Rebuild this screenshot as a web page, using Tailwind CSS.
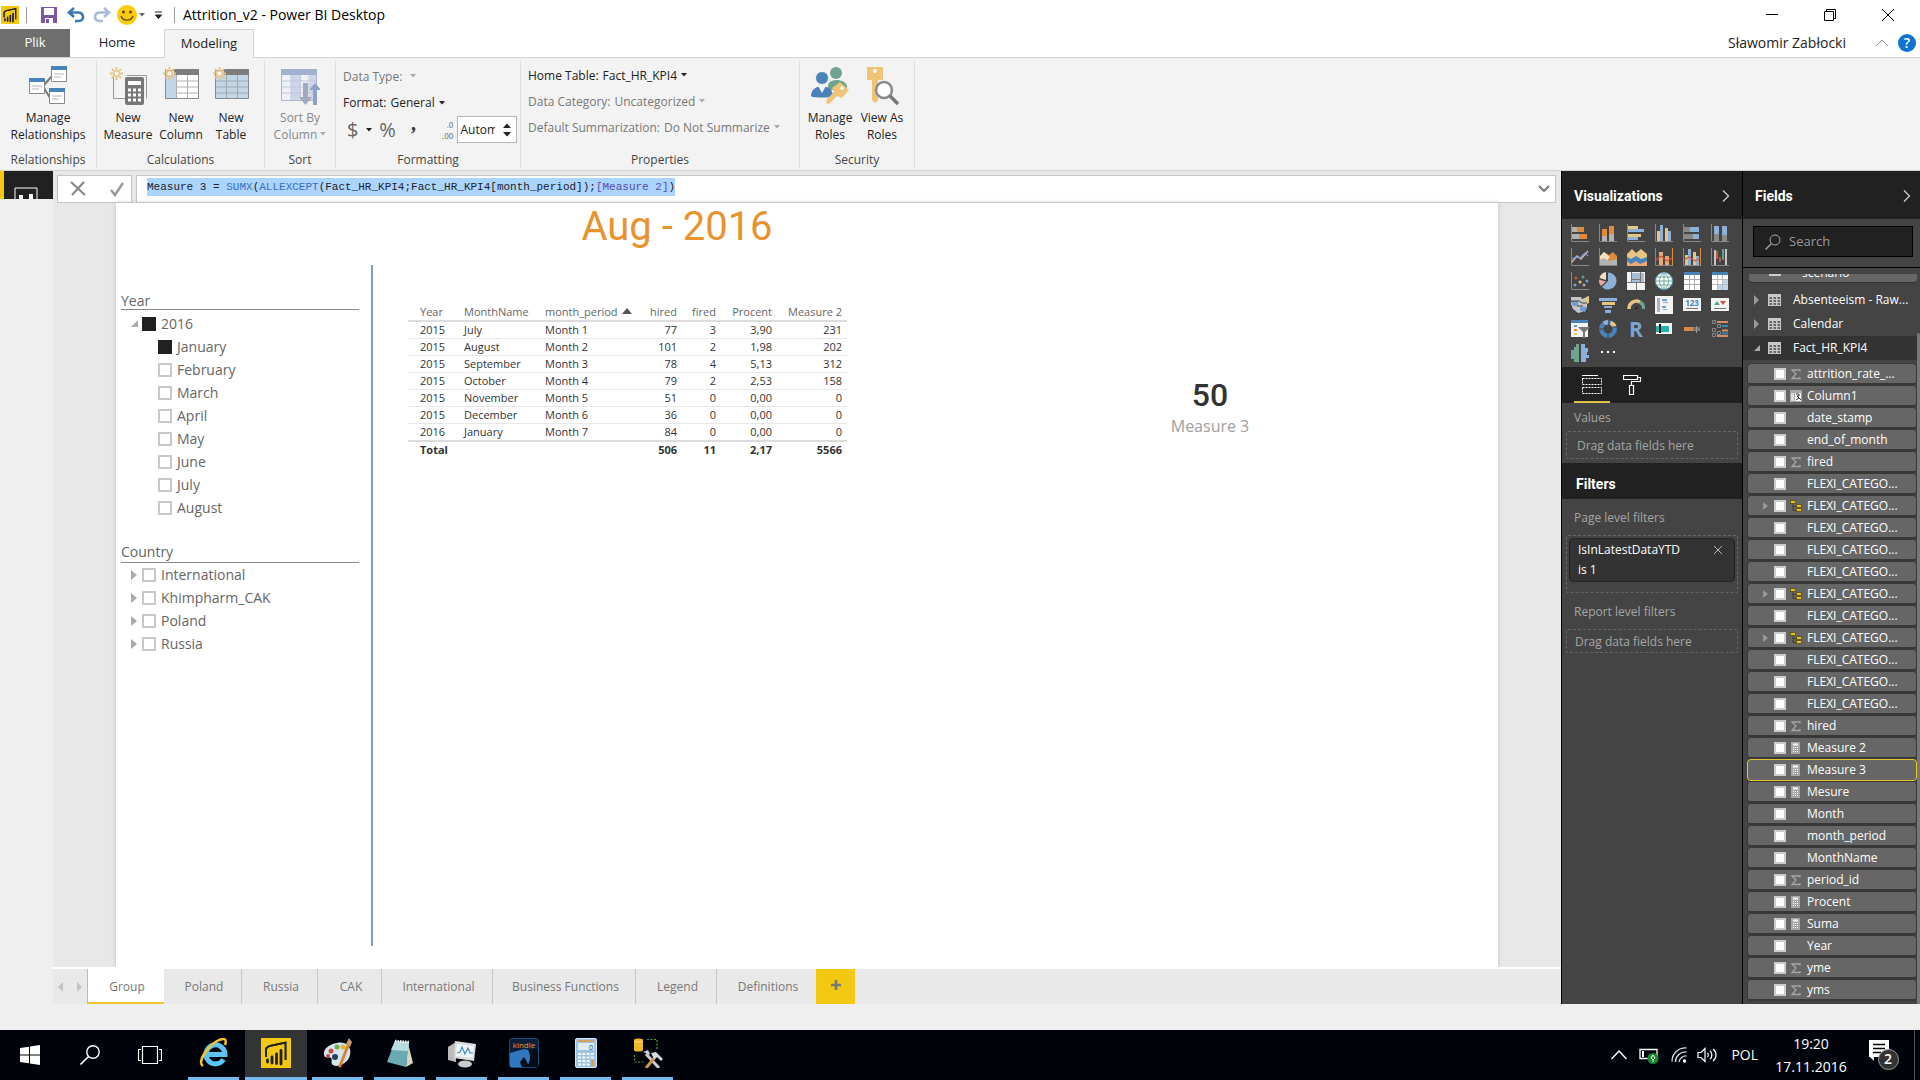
<!DOCTYPE html>
<html lang="en">
<head>
  <meta charset="UTF-8" />
  <meta name="viewport" content="width=device-width, initial-scale=1.0"/>
  <title>Attrition_v2 - Power BI Desktop</title>
  <script src="https://cdn.jsdelivr.net/npm/@tailwindcss/browser@4"></script>
</head>
<body class="flex flex-col min-h-screen bg-[#efefef] text-[#222] text-xs font-['Open_Sans','Noto_Sans',sans-serif]">

  <!-- shared symbols -->
  <svg class="hidden">
    <symbol id="pbi" viewBox="0 0 30 30">
      <rect width="30" height="30" fill="#f2c811"/>
      <path d="M5 19V10.500L8 8L24.500 4.500V22" fill="none" stroke="#222" stroke-width="1.800"/>
      <path d="M5 24V19M10 26V15M15.500 27V12M21 27V9" stroke="#f2c811" stroke-width="5"/>
      <path d="M5 19V10.500L8 8L24.500 4.500V22" fill="none" stroke="#222" stroke-width="1.800"/>
      <path d="M6.500 22v2M11 19v6M15.500 16v9.500M20 12.500v13.500" stroke="#222" stroke-width="2.800" stroke-linecap="round"/>
    </symbol>
    <symbol id="down" viewBox="0 0 6 4"><path d="M0 0h6L3 3.500z" fill="currentColor"/></symbol>
    <symbol id="star" viewBox="0 0 16 16">
      <circle cx="8" cy="8" r="3" fill="#fff" stroke="#eac282" stroke-width="1.500"/>
      <path d="M8 1v3M8 12v3M1 8h3M12 8h3M3 3l2 2M11 11l2 2M13 3l-2 2M5 11l-2 2" stroke="#eac282" stroke-width="2"/>
    </symbol>
    <symbol id="right" viewBox="0 0 8 12"><path d="M1 0.500L6.500 6L1 11.500" fill="none" stroke="currentColor" stroke-width="1.300"/></symbol>
    <symbol id="grid" viewBox="0 0 13 12">
      <rect width="13" height="12" fill="#c8c8c8"/>
      <path d="M1.500 4h2.500M5.500 4h2.500M9.500 4h2.500M1.500 7h2.500M5.500 7h2.500M9.500 7h2.500M1.500 10h2.500M5.500 10h2.500M9.500 10h2.500" stroke="#444" stroke-width="1.500"/>
    </symbol>
    <symbol id="sigma" viewBox="0 0 12 12"><path d="M10 3.500V2H2l4 4-4 4.500h8V9" fill="none" stroke="#a6a6a6" stroke-width="1.300"/></symbol>
    <symbol id="calc" viewBox="0 0 12 12">
      <rect x="1" width="9" height="12" fill="#a6a6a6"/><rect x="3" y="1.500" width="5" height="2" fill="#fff"/>
      <path d="M3 5.500h5M3 7.500h5M3 9.500h5" stroke="#fff" stroke-dasharray="1 1"/>
    </symbol>
    <symbol id="tree" viewBox="0 0 12 12">
      <path d="M3 3v7.500h4M3 6.500h4" fill="none" stroke="#222" stroke-dasharray="1.500 1"/>
      <path d="M.5 .5h5v3h-5zM6.500 4.500h5v3h-5zM6.500 8.500h5v3h-5z" fill="#e0c232" stroke="#5c4a00" stroke-width=".8"/>
    </symbol>
    <symbol id="column" viewBox="0 0 12 12">
      <rect width="12" height="12" fill="#a6a6a6"/><path d="M1 3h3v8H1z" fill="#ddd"/><path d="M5 3h6v8H5z" fill="#fff"/>
      <path d="M6 4h3v2H7l2 2-3 2M9 8l2 2" fill="none" stroke="#333"/>
    </symbol>
  </svg>

  <!-- title bar -->
  <header class="flex items-center h-[29px] bg-white text-black">
    <svg class="ml-px size-[18px]"><use href="#pbi"/></svg>
    <span class="ml-[7px] w-px h-4 bg-[#999]"></span>
    <button class="ml-3.5" aria-label="Save">
      <svg class="size-4" viewBox="0 0 16 16"><path d="M0 0h16v16H0z" fill="#7f55a5"/><path d="M3 1h10v7H3zM4 11h8v5H4z" fill="#fff"/><path d="M5 12h3v4H5z" fill="#7f55a5"/></svg>
    </button>
    <button class="ml-2.5" aria-label="Undo">
      <svg class="w-[18px] h-4" viewBox="0 0 18 16"><path d="M7 1L2 5.500L7 10M2 5.500h9c6 0 7 8 1 8.500H8" fill="none" stroke="#3c78b4" stroke-width="2.600"/></svg>
    </button>
    <button class="ml-2" aria-label="Redo">
      <svg class="w-[18px] h-4" viewBox="0 0 18 16"><path d="M11 1l5 4.500L11 10M16 5.500H7c-6 0-7 8-1 8.500h4" fill="none" stroke="#a9bdd6" stroke-width="2.600"/></svg>
    </button>
    <button class="ml-1.5 flex items-center gap-0.5" aria-label="Send feedback">
      <svg class="size-5" viewBox="0 0 20 20"><circle cx="10" cy="10" r="10" fill="#fccb0a"/><circle cx="6.500" cy="7" r="1.500" fill="#5a4a10"/><circle cx="13.500" cy="7" r="1.500" fill="#5a4a10"/><path d="M4 11c2 5.500 10 5.500 12 0" fill="none" stroke="#5a4a10" stroke-width="1.300"/></svg>
      <svg class="w-1.5 h-1 text-[#666]"><use href="#down"/></svg>
    </button>
    <button class="ml-2.5" aria-label="Customize toolbar">
      <svg class="w-[7px] h-2" viewBox="0 0 7 8"><path d="M0 1h7M0.500 4h6L3.500 7.500z" stroke="#222" fill="#222" stroke-width="1"/></svg>
    </button>
    <span class="ml-3 w-px h-4 bg-[#999]"></span>
    <h1 class="ml-2 text-sm">Attrition_v2 - Power BI Desktop</h1>
    <div class="ml-auto flex items-center mr-[26px] gap-[46px]">
      <button aria-label="Minimize"><svg class="size-3" viewBox="0 0 12 12"><path d="M0 5.500h12" stroke="#000"/></svg></button>
      <button aria-label="Restore"><svg class="size-3" viewBox="0 0 12 12"><path d="M.5 2.500h9v9h-9zM2.500 2.500v-2h9v9h-2" fill="none" stroke="#000"/></svg></button>
      <button aria-label="Close"><svg class="size-3" viewBox="0 0 12 12"><path d="M0 0l12 12M12 0L0 12" stroke="#000"/></svg></button>
    </div>
  </header>

  <!-- ribbon tabs -->
  <nav class="flex h-[29px] bg-white border-b border-[#d2d2d2] text-[13px]">
    <button class="w-[70px] bg-[#6e6e6e] text-white">Plik</button>
    <button class="w-[94px]">Home</button>
    <button class="w-[90px] -mb-px bg-[#f3f3f3] border border-b-0 border-[#d2d2d2]">Modeling</button>
    <div class="ml-auto flex items-center mr-1 text-sm">
      <span>Sławomir Zabłocki</span>
      <button class="ml-[30px]" aria-label="Collapse ribbon"><svg class="w-3 h-2" viewBox="0 0 12 8"><path d="M0 7l6-6 6 6" fill="none" stroke="#999"/></svg></button>
      <button class="ml-2.5 size-[18px] rounded-full bg-[#0f73d0] text-white text-sm/[18px] font-semibold" aria-label="Help">?</button>
    </div>
  </nav>

  <!-- ribbon -->
  <section class="flex h-[113px] pt-[3px] pb-0.5 bg-[#f3f3f3] border-b border-[#d2d2d2] text-center leading-[17px]">
    <div class="flex flex-col w-[97px] border-r border-[#dedede]">
      <button class="flex flex-col items-center mt-[5px]">
        <svg class="w-[38px] h-[40px] mb-[3px]" viewBox="0 0 38 40">
          <path d="M15 19l8-9M15 22l6 10" stroke="#777" stroke-width="2"/>
          <g fill="#fff" stroke="#8a8a8a"><path d="M22.500 .5h15v15h-15zM.5 12.500h15v15h-15zM20.500 22.500h15v15h-15z"/></g>
          <path d="M22 0h16v4H22zM0 12h16v4H0zM20 22h16v4H20z" fill="#4a82ba"/>
          <path d="M25 8h10M25 11h7M3 20h10M3 23h7M23 30h10M23 33h7" stroke="#b5b5b5"/>
        </svg>
        <span>Manage<br>Relationships</span>
      </button>
      <span class="mt-auto text-[#444]">Relationships</span>
    </div>

    <div class="flex flex-col w-[168px] border-r border-[#dedede]">
      <div class="flex mt-[5px] pl-[3px]">
        <button class="flex flex-col items-center w-[56px]">
          <svg class="w-[38px] h-[40px] mb-[3px]" viewBox="0 0 38 40">
            <path d="M4.500 11v21.500h13M18 9.500h19.500v23" fill="none" stroke="#999"/>
            <rect x="16" y="11" width="19" height="28" rx="2" fill="#777"/>
            <path d="M19 15h13v4H19z" fill="#fff"/>
            <path d="M19 24h13M19 29h13M19 34h13" stroke="#fff" stroke-width="3" stroke-dasharray="3 2"/>
            <use href="#star" width="15" height="15"/>
          </svg>
          <span>New<br>Measure</span>
        </button>
        <button class="flex flex-col items-center w-[50px]">
          <svg class="w-[38px] h-[40px] mb-[3px]" viewBox="0 0 38 40">
            <path d="M3.500 4.500h33v28h-33z" fill="#fff" stroke="#8a8a8a"/><path d="M4 9h10v23H4z" fill="#c2d6e6"/><path d="M12 3h25v6H12z" fill="#7d7d7d"/>
            <path d="M14.500 9v23M25.500 9v23M14 15h22M14 21h22M14 27h22" stroke="#b0b0b0"/>
            <use href="#star" width="15" height="15"/>
          </svg>
          <span>New<br>Column</span>
        </button>
        <button class="flex flex-col items-center w-[50px]">
          <svg class="w-[38px] h-[40px] mb-[3px]" viewBox="0 0 38 40">
            <path d="M3.500 4.500h33v28h-33z" fill="#c2d6e6" stroke="#8a8a8a"/><path d="M12 3h25v6H12z" fill="#7d7d7d"/>
            <path d="M14.500 9v23M25.500 9v23M4 15h32M4 21h32M4 27h32" stroke="#9fa9b0"/>
            <use href="#star" width="15" height="15"/>
          </svg>
          <span>New<br>Table</span>
        </button>
      </div>
      <span class="mt-auto text-[#444]">Calculations</span>
    </div>

    <div class="flex flex-col w-[71px] border-r border-[#dedede]">
      <button class="flex flex-col items-center mt-[5px] text-[#888]" disabled>
        <svg class="w-[40px] h-[40px] mb-[3px]" viewBox="0 0 40 40">
          <path d="M1.500 4.500h35v30h-35z" fill="#eef1f7" stroke="#aab4cc"/><path d="M11 9h10v25H11zM30 9h6v25h-6z" fill="#ccd6e8"/><path d="M1 3h36v6H1z" fill="#a2b1cf"/>
          <path d="M11 9v25M20.500 9v25M29 9v25M2 15h34M2 21h34M2 27h34" stroke="#c2c9da"/>
          <path d="M23 17h5v14h4l-6.500 8-6.500-8h4z" fill="#a0aabf"/><path d="M33 39h4V24h4l-6-7-6 7h4z" fill="#8ea2c6"/>
        </svg>
        <span>Sort By<br>Column <svg class="inline w-1.5 h-1 mb-1 text-[#aaa]"><use href="#down"/></svg></span>
      </button>
      <span class="mt-auto text-[#444]">Sort</span>
    </div>

    <div class="flex flex-col w-[185px] border-r border-[#dedede]">
      <label class="flex items-center gap-2 mt-0.5 ml-[7px] h-[26px] text-[#777]">
        <span>Data Type:</span>
        <svg class="w-1.5 h-1 text-[#aaa]"><use href="#down"/></svg>
      </label>
      <label class="flex items-center gap-1 ml-[7px] h-[27px]">
        <span>Format:</span>
        <select class="appearance-none field-sizing-content"><option>General</option></select>
        <svg class="w-1.5 h-1"><use href="#down"/></svg>
      </label>
      <div class="flex items-center h-[27px] ml-[11px] text-[#666] text-xl/[27px]">
        <button class="flex items-center gap-2" aria-label="Currency">$ <svg class="w-1.5 h-1 text-[#222]"><use href="#down"/></svg></button>
        <button class="ml-[5px] w-5">%</button>
        <button class="ml-2 w-4 font-bold -mt-3 font-['Liberation_Serif',serif] text-[#333]" aria-label="Thousands separator">,</button>
        <button class="ml-3 w-5 text-[8px]/[11px] text-right text-[#888] font-semibold" aria-label="Decimal places">.0<br>.00</button>
        <label class="ml-1 flex items-center w-[60px] h-[27px] pl-0.5 bg-white border border-[#b5b5b5]">
          <input class="w-[35px] text-xs text-[#222]" type="text" value="Automatic" aria-label="Decimal digits" />
          <svg class="ml-2 w-2 h-3.5" viewBox="0 0 8 14"><path d="M0 5l4-4.500L8 5zM0 9l4 4.500L8 9z" fill="#222"/></svg>
        </label>
      </div>
      <span class="mt-auto text-[#444]">Formatting</span>
    </div>

    <div class="flex flex-col w-[279px] border-r border-[#dedede]">
      <label class="flex items-center gap-1 mt-px ml-[7px] h-[26px]">
        <span>Home Table:</span>
        <select class="appearance-none field-sizing-content"><option>Fact_HR_KPI4</option></select>
        <svg class="w-1.5 h-1"><use href="#down"/></svg>
      </label>
      <label class="flex items-center gap-1 ml-[7px] h-[26px] text-[#777]">
        <span>Data Category:</span>
        <select class="appearance-none field-sizing-content disabled:opacity-100" disabled><option>Uncategorized</option></select>
        <svg class="w-1.5 h-1 text-[#aaa]"><use href="#down"/></svg>
      </label>
      <label class="flex items-center gap-1 ml-[7px] h-[26px] text-[#777]">
        <span>Default Summarization:</span>
        <select class="appearance-none field-sizing-content disabled:opacity-100" disabled><option>Do Not Summarize</option></select>
        <svg class="w-1.5 h-1 text-[#aaa]"><use href="#down"/></svg>
      </label>
      <span class="mt-auto text-[#444]">Properties</span>
    </div>

    <div class="flex flex-col w-[115px] border-r border-[#dedede]">
      <div class="flex mt-[5px] pl-[3px]">
        <button class="flex flex-col items-center w-[54px]">
          <svg class="w-[40px] h-[40px] mb-[3px]" viewBox="0 0 40 40">
            <circle cx="26" cy="7" r="6" fill="#6fa590"/><path d="M18 20c0-8 17-8 19 0v4H18z" fill="#6fa590"/>
            <circle cx="12" cy="12" r="6.500" fill="#4a82ba" stroke="#f3f3f3"/><path d="M1 30c0-13 22-13 22 0 0 2-22 2-22 0z" fill="#4a82ba"/><path d="M8 20h8l-4 7z" fill="#f3f3f3"/>
            <path d="M22 22l8-6 9 8-7 8-5-2-8 8-3-1 1-4 7-7z" fill="#eec477"/><circle cx="32" cy="22" r="1.800" fill="#fff"/>
          </svg>
          <span>Manage<br>Roles</span>
        </button>
        <button class="flex flex-col items-center w-[50px]">
          <svg class="w-[34px] h-[40px] mb-[3px]" viewBox="0 0 34 40">
            <path d="M2 1h16v13h-5v21l-3 2-3-3V14H2z" fill="#eec477"/><circle cx="10" cy="5" r="2" fill="#fff"/>
            <circle cx="19" cy="24" r="8" fill="#fff" stroke="#8a8a8a" stroke-width="2.500"/><path d="M25 30l8 8" stroke="#777" stroke-width="3.500"/>
          </svg>
          <span>View As<br>Roles</span>
        </button>
      </div>
      <span class="mt-auto text-[#444]">Security</span>
    </div>
  </section>

  <main class="flex flex-1">
    <!-- view switcher, mostly hidden below the formula bar -->
    <div class="w-[53px]">
      <button class="block w-full h-7 bg-[#212121] border-l-4 border-[#f2c811] overflow-hidden" aria-label="Report view">
        <svg class="w-6 h-3 mt-4 ml-2.5" viewBox="0 0 24 12"><path d="M1 12V1h22v11" fill="none" stroke="#fff"/><path d="M7 12V8M17 12V7" stroke="#fff" stroke-width="4"/></svg>
      </button>
    </div>

    <div class="flex-1 flex flex-col min-w-0 bg-[#e8e8e8]">
      <!-- formula bar -->
      <div class="flex h-8 pt-1 pl-1 pr-[5px] gap-1">
        <div class="flex items-center justify-center gap-6 w-[75px] h-7 pl-1 bg-white border border-[#c6c6c6]">
          <button aria-label="Cancel"><svg class="size-4" viewBox="0 0 16 16"><path d="M1 1l14 13M14 1L2 14" stroke="#888" stroke-width="2.200" fill="none"/></svg></button>
          <button aria-label="Commit"><svg class="w-3.5 h-4" viewBox="0 0 14 16"><path d="M1 9l4 5L13 2" stroke="#999" stroke-width="2.500" fill="none"/></svg></button>
        </div>
        <div class="flex flex-1 items-center h-7 pl-2.5 pr-[5px] bg-white border border-[#c6c6c6]">
          <div class="flex-1 mb-1 text-[11px]/[18px] font-['Liberation_Mono',monospace] whitespace-pre outline-none" contenteditable="true" role="textbox" aria-label="Formula" spellcheck="false"><span class="inline-block bg-[#abd4ff]">Measure 3 = <span class="text-[#3a6fc4]">SUMX</span>(<span class="text-[#3a6fc4]">ALLEXCEPT</span>(Fact_HR_KPI4;Fact_HR_KPI4[month_period]);<span class="text-[#5a48a8]">[Measure 2]</span>)</span></div>
          <button aria-label="Expand formula bar"><svg class="w-3 h-2" viewBox="0 0 12 8"><path d="M1 1l5 5 5-5" fill="none" stroke="#777" stroke-width="2"/></svg></button>
        </div>
      </div>

      <!-- report page -->
      <div class="flex-1 flex ml-[63px] mr-[63px] pl-[5px] bg-white shadow-[0_0_4px_#bbb]">
        <div class="w-[238px] pt-[88px] text-[#666] text-sm">
          <h2 class="h-[19px] leading-5 border-b border-[#888]">Year</h2>
          <ul id="years" class="pt-0.5"></ul>
          <h2 class="mt-6 h-5 leading-[18px] border-b border-[#888]">Country</h2>
          <ul id="countries"></ul>
        </div>
        <div class="w-0.5 ml-3 mt-[62px] mb-[21px] bg-[#819fb5]"></div>

        <div class="w-[607px] pl-[35px]">
          <h2 class="w-[538px] h-[93px] pt-px text-center text-[40px]/[46px] font-['Roboto',sans-serif] text-[#e8932e]">Aug - 2016</h2>
          <table class="w-[439px] table-fixed text-[11px]/[16px] text-[#333]">
            <colgroup><col class="w-[44px]"><col class="w-[81px]"><col class="w-[96px]"><col class="w-[53px]"><col class="w-[39px]"><col class="w-[56px]"><col class="w-[70px]"></colgroup>
            <thead class="text-[#666] border-b-2 border-[#dcdcdc]">
              <tr class="h-[25px] whitespace-nowrap">
                <th class="pl-3 text-left font-normal align-bottom">Year</th>
                <th class="pl-3 text-left font-normal align-bottom">MonthName</th>
                <th class="pl-3 text-left font-normal align-bottom">month_period <svg class="inline w-2.5 h-1.5 mb-1 ml-0.5" viewBox="0 0 10 6"><path d="M0 6l5-6 5 6z" fill="#555"/></svg></th>
                <th class="pr-[5px] text-right font-normal align-bottom">hired</th>
                <th class="pr-[5px] text-right font-normal align-bottom">fired</th>
                <th class="pr-[5px] text-right font-normal align-bottom">Procent</th>
                <th class="pr-[5px] text-right font-normal align-bottom">Measure 2</th>
              </tr>
            </thead>
            <tbody id="rows"></tbody>
            <tfoot class="border-t-2 border-[#dcdcdc] font-bold">
              <tr>
                <td class="pl-3" colspan="3">Total</td>
                <td class="pr-[5px] text-right">506</td>
                <td class="pr-[5px] text-right">11</td>
                <td class="pr-[5px] text-right">2,17</td>
                <td class="pr-[5px] text-right">5566</td>
              </tr>
            </tfoot>
          </table>
        </div>

        <div class="w-[460px] pt-[174px] text-center">
          <div class="text-[32px]/[36px] font-medium font-['Roboto',sans-serif] text-[#333]">50</div>
          <div class="mt-[3px] text-base/5 text-[#a0a0a0]">Measure 3</div>
        </div>
      </div>

      <!-- page tabs -->
      <nav class="flex h-[37px] border-t-2 border-white text-[#777] bg-[#e9e9e9]">
        <div class="flex items-center justify-center gap-3 w-[35px] border-r border-[#bbb]">
          <button aria-label="Previous page"><svg class="w-1.5 h-2.5" viewBox="0 0 6 10"><path d="M5 0v10L0 5z" fill="#c4c4c4"/></svg></button>
          <button aria-label="Next page"><svg class="w-1.5 h-2.5" viewBox="0 0 6 10"><path d="M1 0v10l5-5z" fill="#c4c4c4"/></svg></button>
        </div>
        <button class="w-[76px] pl-0.5 pt-0.5 bg-white border-b-2 border-[#efc82a]">Group</button>
        <button class="w-[78px] pl-[3px] border-r border-[#c6c6c6]">Poland</button>
        <button class="w-[76px] pl-[3px] border-r border-[#c6c6c6]">Russia</button>
        <button class="w-[64px] pl-[3px] border-r border-[#c6c6c6]">CAK</button>
        <button class="w-[111px] pl-[3px] border-r border-[#c6c6c6]">International</button>
        <button class="w-[143px] pl-[3px] border-r border-[#c6c6c6]">Business Functions</button>
        <button class="w-[81px] pl-[3px] border-r border-[#c6c6c6]">Legend</button>
        <button class="w-[99px] pl-[3px]">Definitions</button>
        <button class="flex items-center justify-center w-[39px] bg-[#f2c811]" aria-label="New page"><svg class="size-3 -mt-1" viewBox="0 0 12 12"><path d="M6 1v10M1 6h10" stroke="#777" stroke-width="2.500"/></svg></button>
      </nav>
    </div>

    <!-- visualizations pane -->
    <aside class="w-[182px] bg-[#444] border-l border-r border-black text-[#a6a6a6]">
      <div class="flex items-center justify-between h-12 pt-px pl-3 pr-3 bg-[#212121] text-white">
        <h2 class="text-sm font-bold font-['Roboto',sans-serif]">Visualizations</h2>
        <button aria-label="Collapse"><svg class="w-2 h-3 text-[#ccc]"><use href="#right"/></svg></button>
      </div>

      <div class="grid grid-cols-[repeat(6,28px)] auto-rows-[24px] items-start h-[148px] pl-[9px] pt-[5px]">
        <button aria-label="Stacked bar chart"><svg class="size-[18px]" viewBox="0 0 18 18"><path d="M.5 0v17.500H18" fill="none" stroke="#888"/><path d="M1 3h5v5H1zM1 10h7v5H1z" fill="#b3b3b3"/><path d="M6 3h7v5H6zM8 10h8v5H8z" fill="#e08a3c"/></svg></button>
        <button aria-label="Stacked column chart"><svg class="size-[18px]" viewBox="0 0 18 18"><path d="M.5 0v17.500H18" fill="none" stroke="#888"/><path d="M3 12h5v5H3zM10 10h5v7h-5z" fill="#b3b3b3"/><path d="M3 5h5v7H3zM10 2h5v8h-5z" fill="#e08a3c"/></svg></button>
        <button aria-label="Clustered bar chart"><svg class="size-[18px]" viewBox="0 0 18 18"><path d="M.5 0v17.500H18" fill="none" stroke="#888"/><path d="M1 2h10v3H1zM1 10h13v3H1z" fill="#e6c582"/><path d="M1 5h16v3H1zM1 13h10v3H1z" fill="#8cb0d8"/></svg></button>
        <button aria-label="Clustered column chart"><svg class="size-[18px]" viewBox="0 0 18 18"><path d="M.5 0v17.500H18" fill="none" stroke="#888"/><path d="M2 7h3v10H2zM10 4h3v13h-3z" fill="#e6c582"/><path d="M5 1h3v16H5zM13 7h3v10h-3z" fill="#8cb0d8"/></svg></button>
        <button aria-label="100% stacked bar chart"><svg class="size-[18px]" viewBox="0 0 18 18"><path d="M.5 0v17.500H18" fill="none" stroke="#888"/><path d="M1 3h6v5H1zM1 10h9v5H1z" fill="#888"/><path d="M7 3h9v5H7zM10 10h6v5h-6z" fill="#8cb0d8"/></svg></button>
        <button aria-label="100% stacked column chart"><svg class="size-[18px]" viewBox="0 0 18 18"><path d="M.5 0v17.500H18" fill="none" stroke="#888"/><path d="M3 9h5v8H3zM11 11h5v6h-5z" fill="#888"/><path d="M3 2h5v8H3zM11 2h5v9h-5z" fill="#8cb0d8"/></svg></button>

        <button aria-label="Line chart"><svg class="size-[18px]" viewBox="0 0 18 18"><path d="M.5 0v17.500H18" fill="none" stroke="#888"/><path d="M1 14L6 8l4 3 7-8" fill="none" stroke="#e8b8a8" stroke-width="1.300"/><path d="M1 11l4-2 4 1 5-5 3 3" fill="none" stroke="#6f9fd8" stroke-width="1.300"/></svg></button>
        <button aria-label="Area chart"><svg class="size-[18px]" viewBox="0 0 18 18"><path d="M0 10l5-6 5 3 4-3 4 4v9H0z" fill="#e08a3c"/><path d="M0 9l5-5 6 5-4 5-7 2z" fill="#f3e0bd"/><path d="M0 12l5-2 5 3 8-2v6H0z" fill="#b3b3b3"/><path d="M.5 0v17.500H18" fill="none" stroke="#888"/></svg></button>
        <button aria-label="Stacked area chart"><svg class="w-5 h-[18px]" viewBox="0 0 20 18"><path d="M0 6l5-5 4 4 5-4 6 5v6H0z" fill="#e6c582"/><path d="M0 9l4 2 5-3 5 3 6-2v9H0z" fill="#4a82ba"/><path d="M0 13l4 3 5-3 4 3 7-3v5H0z" fill="#e8a878"/></svg></button>
        <button aria-label="Line and stacked column chart"><svg class="size-[18px]" viewBox="0 0 18 18"><path d="M.5 0v17.500H18" fill="none" stroke="#888"/><path d="M17.500 0v17" stroke="#e08a3c"/><path d="M4 4h4v13H4zM10 8h4v9h-4z" fill="#e8a878"/><path d="M1 12l5-4 6 5 5-3" fill="none" stroke="#d0553a" stroke-width="1.200"/></svg></button>
        <button aria-label="Line and clustered column chart"><svg class="size-[18px]" viewBox="0 0 18 18"><path d="M.5 0v17.500H18" fill="none" stroke="#888"/><path d="M17.500 0v17" stroke="#e08a3c"/><path d="M2 7h3v10H2zM10 4h3v13h-3z" fill="#e6c582"/><path d="M5 1h3v16H5zM13 8h3v9h-3z" fill="#8cb0d8"/><path d="M1 12l5-3 6 4 5-3" fill="none" stroke="#d0553a" stroke-width="1.200"/></svg></button>
        <button aria-label="Waterfall chart"><svg class="size-[18px]" viewBox="0 0 18 18"><path d="M.5 0v17.500H18" fill="none" stroke="#888"/><path d="M3 2h2v15H3zM14 1h2v16h-2z" fill="#c6c6c6"/><path d="M5 3h2v8H5zM8 9h2v5H8z" fill="#c0583c"/><path d="M11 1h2v11h-2z" fill="#5fa088"/></svg></button>

        <button aria-label="Scatter chart"><svg class="size-[18px]" viewBox="0 0 18 18"><path d="M.5 0v17.500H18" fill="none" stroke="#888"/><circle cx="5" cy="6" r="1.500" fill="#d0553a"/><circle cx="12" cy="5" r="1.500" fill="#5fa088"/><circle cx="9" cy="10" r="1.500" fill="#e6c582"/><circle cx="4" cy="13" r="1.500" fill="#6f9fd8"/><circle cx="16" cy="9" r="1.500" fill="#6f9fd8"/><circle cx="13" cy="13" r="1.500" fill="#aaa"/></svg></button>
        <button aria-label="Pie chart"><svg class="size-[18px]" viewBox="0 0 18 18"><path d="M9 9V0.500a8.500 8.500 0 1 1-6 14.500z" fill="#8cb0d8"/><path d="M7 8L0.500 6A8 8 0 0 1 7 0z" fill="#f3e0bd"/><path d="M7 9.500L2 14A8 8 0 0 1 0 7.500z" fill="#e8a89a"/></svg></button>
        <button aria-label="Treemap"><svg class="size-[18px]" viewBox="0 0 18 18"><rect width="18" height="18" fill="#f3f3f3"/><path d="M5 1h8v6H5zM14 1h3v9h-3zM5 8h8v2H5z" fill="#a8bcd8"/><path d="M4.500 0v10.500M0 10.500h18M13.500 0v10.500M4 7.500h9M9.500 10v8" stroke="#777"/></svg></button>
        <button aria-label="Map"><svg class="size-[18px]" viewBox="0 0 18 18"><circle cx="9" cy="9" r="8.500" fill="#fff" stroke="#5a9cc0"/><path d="M9 .5v17M.5 9h17M2 5h14M2 13h14M9 .5c-6 4-6 13 0 17M9 .5c6 4 6 13 0 17" fill="none" stroke="#6aa99a"/></svg></button>
        <button aria-label="Table"><svg class="size-[18px]" viewBox="0 0 18 18"><rect x="1" width="16" height="18" fill="#fff"/><rect x="1" width="16" height="3" fill="#4a82ba"/><path d="M6.500 3v15M11.500 3v15M1 7.500h16M1 12.500h16" stroke="#aaa"/></svg></button>
        <button aria-label="Matrix"><svg class="size-[18px]" viewBox="0 0 18 18"><rect x="1" width="16" height="18" fill="#fff"/><rect x="1" width="16" height="3" fill="#4a82ba"/><path d="M12 8h5v10h-5zM7 13h5v5H7z" fill="#c2d6ea"/><path d="M6.500 3v15M11.500 3v15M1 7.500h16M1 12.500h16" stroke="#bbb"/></svg></button>

        <button aria-label="Filled map"><svg class="size-[18px]" viewBox="0 0 18 18"><path d="M0 1h10l1 2 5-2 2-1v6l-2 2v4l-5 4-4 1-5-4-2-5z" fill="#c6c6c6"/><path d="M0 5h7v5H2zM9 11h7l-2 5-5-1z" fill="#6f9fd0"/><path d="M15 1l3-1v7l-3 1z" fill="#e6c582"/><path d="M0 5h8l3 2h5M6 10h6" fill="none" stroke="#444"/></svg></button>
        <button aria-label="Funnel"><svg class="size-[18px]" viewBox="0 0 18 18"><path d="M0 2h18v3H0zM5 10h8v2H5z" fill="#8cb0d8"/><path d="M3 6h13v3H3z" fill="#e6c582"/><path d="M6 14h6v3H6z" fill="#8cb0d8"/></svg></button>
        <button aria-label="Gauge"><svg class="size-[18px]" viewBox="0 0 18 18"><path d="M2 13a7.500 7.500 0 0 1 11-7" fill="none" stroke="#e6c582" stroke-width="3.500"/><path d="M13 6a7.500 7.500 0 0 1 3.500 7" fill="none" stroke="#6fa590" stroke-width="3.500"/><path d="M7 13l5-4-2 4z" fill="#222"/></svg></button>
        <button aria-label="Multi-row card"><svg class="size-[18px]" viewBox="0 0 18 18"><rect width="18" height="18" fill="#f3f3f3"/><path d="M2 2h3v14H2z" fill="#b3b3b3"/><path d="M7 3h5v2H7zM7 10h4v2H7z" fill="#6f9fd0"/><path d="M8 6.500h5M8 13.500h4" stroke="#8cb0d8"/></svg></button>
        <button aria-label="Card"><svg class="size-[18px]" viewBox="0 0 18 18"><rect y="2" width="18" height="13" fill="#f3f3f3"/><path d="M3 12.500h12" stroke="#777"/><text x="9" y="10" text-anchor="middle" font-size="8" font-weight="700" fill="#4a82ba">123</text></svg></button>
        <button aria-label="KPI"><svg class="size-[18px]" viewBox="0 0 18 18"><rect y="2" width="18" height="13" fill="#f3f3f3"/><path d="M3 12.500h12" stroke="#777"/><path d="M3 9l3-4 3 4z" fill="#5fa088"/><path d="M9 5h6l-3 4z" fill="#c0583c"/></svg></button>

        <button aria-label="Slicer"><svg class="w-[19px] h-[18px]" viewBox="0 0 19 18"><rect width="17" height="17" fill="#f3f3f3"/><rect width="17" height="3" fill="#4a82ba"/><path d="M3 5h3v2H3z" fill="#6f9fd0"/><path d="M3 9h3v2H3z" fill="#e08a3c"/><path d="M3 13h3v2H3z" fill="#e6c582"/><path d="M7 7h12l-5 5v6h-2v-6z" fill="#777"/></svg></button>
        <button aria-label="Donut chart"><svg class="size-[18px]" viewBox="0 0 18 18"><circle cx="9" cy="9" r="6.800" fill="none" stroke="#4a82ba" stroke-width="4.400"/><path d="M5 3.500a6.800 6.800 0 0 1 4-1.300" fill="none" stroke="#8cb0d8" stroke-width="4.400"/><path d="M11.500 2.700a6.800 6.800 0 0 1 4 4" fill="none" stroke="#e6c582" stroke-width="4.400"/><path d="M10 0v5M18 7h-5M0 9h5M9 18v-5" stroke="#444"/></svg></button>
        <button aria-label="R script visual" class="flex w-[18px] justify-center text-[21px]/[18px] font-bold text-[#7ba4d2]">R</button>
        <button aria-label="Bullet chart"><svg class="size-[18px]" viewBox="0 0 18 18"><rect x="1" y="3" width="16" height="11" fill="#f3f3f3"/><rect x="1" y="6" width="13" height="6" fill="#1fb5a8"/><path d="M4 4h2v9H4z" fill="#111"/></svg></button>
        <button aria-label="Linear gauge"><svg class="size-[18px]" viewBox="0 0 18 18"><rect x="1" y="7" width="9" height="4" fill="#d98a4a"/><rect x="10" y="7" width="7" height="4" fill="#777"/><path d="M13.500 6v7" stroke="#999"/></svg></button>
        <button aria-label="Chiclet slicer"><svg class="size-[18px]" viewBox="0 0 18 18"><path d="M1.500 .5h3v3h-3zM6.500 4.500h3v3h-3zM1.500 8.500h3v3h-3zM6.500 11.500h3v3h-3zM1.500 13.500h3v3h-3z" fill="none" stroke="#888"/><path d="M6 2h11M11 10.500h6M6 16h11" stroke="#d98a6a" stroke-width="2"/><path d="M11 6h6M11 13.500h6" stroke="#3a86b0" stroke-width="2"/></svg></button>

        <button aria-label="Tornado chart"><svg class="size-[18px]" viewBox="0 0 18 18"><path d="M8 0v18H3v-3H0V6h3V3h2V0z" fill="#6fa590"/><path d="M10 0h4v4h3v4h-1v3h2v3h-3v4h-5z" fill="#8cb0d8"/></svg></button>
        <button aria-label="More"><svg class="size-[18px]" viewBox="0 0 18 18"><path d="M2 8h2M8 8h2M14 8h2" stroke="#fff" stroke-width="2"/></svg></button>
      </div>

      <div class="flex h-9 pl-3 bg-[#212121]">
        <button class="flex justify-center items-center w-9 border-b-2 border-[#e0c04a]" aria-label="Fields">
          <svg class="w-5 h-[19px]" viewBox="0 0 20 19"><path d="M0 .5h16" stroke="#fff"/><path d="M.5 3.500h19v6H.5zM.5 12.500h19v6H.5z" fill="none" stroke="#fff" stroke-dasharray="2 1"/></svg>
        </button>
        <button class="ml-[13px] flex items-center" aria-label="Format">
          <svg class="w-[19px] h-5" viewBox="0 0 19 20"><path d="M.5 .5h14v4H.5zM14.500 2.500h3v4h-9v4M6.500 10.500h4v9h-4z" fill="none" stroke="#fff" stroke-width="1.200"/></svg>
        </button>
      </div>
      <h3 class="h-7 pl-3 leading-[30px]">Values</h3>
      <div class="h-7 mx-1 pl-2.5 leading-7 rounded-xs border border-dashed border-[#666]">Drag data fields here</div>
      <h2 class="mt-1 h-9 pl-3.5 bg-[#212121] text-white text-sm/[42px] font-bold font-['Roboto',sans-serif]">Filters</h2>
      <h3 class="h-9 pl-3 leading-[38px]">Page level filters</h3>
      <div class="h-[58px] mx-1 p-0.5 rounded-xs border border-dashed border-[#666]">
        <div class="h-11 pl-2 rounded-sm bg-[#333] border border-[#222] text-white leading-5">
          <div class="flex items-center justify-between pr-3 pt-px">
            <span>IsInLatestDataYTD</span>
            <button aria-label="Remove filter"><svg class="size-2" viewBox="0 0 8 8"><path d="M0 0l8 8M8 0L0 8" stroke="#bbb"/></svg></button>
          </div>
          <div>is 1</div>
        </div>
      </div>
      <h3 class="h-9 pl-3 leading-[38px]">Report level filters</h3>
      <div class="h-6 mx-1 pl-2 leading-[23px] rounded-xs border border-dashed border-[#666]">Drag data fields here</div>
    </aside>

    <!-- fields pane -->
    <aside class="flex flex-col w-[177px] bg-[#444] text-white">
      <div class="flex items-center justify-between h-12 pt-px pl-3 pr-[9px] bg-[#212121]">
        <h2 class="text-sm font-bold font-['Roboto',sans-serif]">Fields</h2>
        <button aria-label="Collapse"><svg class="w-2 h-3 text-[#ccc]"><use href="#right"/></svg></button>
      </div>
      <div class="h-[49px] pt-[7px] pl-2.5 pr-[7px] border-b border-black">
        <label class="flex items-center gap-2 h-[31px] pl-[11px] bg-[#212121] border border-black">
          <svg class="size-4 shrink-0" viewBox="0 0 16 16"><circle cx="10" cy="6" r="5" fill="none" stroke="#aaa"/><path d="M6.500 9.500L.5 15.500" stroke="#aaa" stroke-width="1.300"/></svg>
          <input class="w-full min-w-0 text-[13px] placeholder:text-[#999] outline-none" type="text" placeholder="Search" aria-label="Search fields" />
        </label>
      </div>
      <div class="flex flex-1 overflow-hidden">
        <div class="flex-1 min-w-0">
          <div class="h-[9px] mt-1.5 ml-1.5 flex items-end overflow-hidden rounded-b-sm bg-[#666] border-b border-[#333]">
            <label class="flex items-center h-5 -mb-px pl-5"><input class="appearance-none size-3 mb-1.5 mr-[21px] bg-white border-2 border-[#ccc]" type="checkbox" />scenario</label>
          </div>
          <ul id="tables" class="pt-[5px]"></ul>
          <ul id="fields" class="pt-[3px] pl-1"></ul>
        </div>
        <div class="w-[3px] mt-[65px] rounded-t-sm bg-[#777]"></div>
      </div>
    </aside>
  </main>

  <div class="h-[26px]"></div>

  <!-- taskbar -->
  <footer class="flex h-[50px] bg-[#00030a] text-white">
    <button class="w-[60px] flex items-center justify-center" aria-label="Start"><svg class="size-5" viewBox="0 0 20 20"><path d="M0 3l9-1.300V9.500H0zM10 1.500L20 0v9.500H10zM0 10.500h9v7.800L0 17zM10 10.500h10V20l-10-1.500z" fill="#fff"/></svg></button>
    <button class="w-[60px] flex items-center justify-center" aria-label="Search"><svg class="size-5" viewBox="0 0 20 20"><circle cx="13" cy="7" r="6.200" fill="none" stroke="#fff" stroke-width="1.400"/><path d="M8.500 11.500L.5 19.500" stroke="#fff" stroke-width="1.600"/></svg></button>
    <button class="w-[60px] mr-[3px] flex items-center justify-center" aria-label="Task view"><svg class="w-6 h-[18px]" viewBox="0 0 24 18"><path d="M4.500 .5h15v17h-15zM3 3.500H.5v11H3M21 3.500h2.500v11H21" fill="none" stroke="#fff" stroke-width="1.200"/></svg></button>

    <button class="w-[62px] pl-[5px] pr-1.5 pt-2 flex flex-col items-center justify-between" aria-label="Internet Explorer">
      <svg class="size-[30px]" viewBox="0 0 30 30"><path d="M24.500 21.500a9.500 9.500 0 1 1 1.500-5H8" fill="none" stroke="#5cc4f0" stroke-width="5"/><path d="M4 28c-6-4 4-19 14-25 8-4 10-2 8 4" fill="none" stroke="#f5c32c" stroke-width="2.500"/></svg>
      <span class="w-full h-[3px] bg-[#76b9ed]"></span>
    </button>
    <button class="w-[62px] pt-2 flex flex-col items-center justify-between bg-[#333436]" aria-label="Power BI Desktop">
      <svg class="size-[30px]"><use href="#pbi"/></svg>
      <span class="w-full h-[3px] bg-[#76b9ed]"></span>
    </button>
    <button class="w-[62px] pl-[5px] pr-1.5 pt-2 flex flex-col items-center justify-between" aria-label="Paint">
      <svg class="size-[30px]" viewBox="0 0 30 30"><path d="M14 5c9-2 15 4 13 12-2 9-13 13-17 10-3-2 0-5-2-7s-6 1-7-3C0 11 6 6 14 5z" fill="#d5e6f2"/><circle cx="8" cy="13" r="2.500" fill="#d0453a"/><circle cx="14" cy="9" r="2.500" fill="#6fb04a"/><circle cx="20" cy="9" r="2.500" fill="#e8b030"/><circle cx="5" cy="18" r="2" fill="#d0453a"/><circle cx="12" cy="19" r="3" fill="#26425e"/><path d="M26 5L17 28" stroke="#d98430" stroke-width="3" stroke-linecap="round"/><path d="M23 6l3-6 3 4-2 5z" fill="#c89a64"/></svg>
      <span class="w-full h-[3px] bg-[#76b9ed]"></span>
    </button>
    <button class="w-[62px] pl-[5px] pr-1.5 pt-2 flex flex-col items-center justify-between" aria-label="Notepad">
      <svg class="size-[30px]" viewBox="0 0 30 30"><path d="M23 5l5 20-7 4z" fill="#d8d2c0"/><path d="M10 3l14 1-3 25L2 24z" fill="#6aaab2"/><path d="M10 3l14 1-1 9L6 12z" fill="#b9dde0"/><path d="M10 3l14 1" stroke="#eee" stroke-width="2.500" stroke-dasharray="1.500 1"/></svg>
      <span class="w-full h-[3px] bg-[#76b9ed]"></span>
    </button>
    <button class="w-[62px] pl-[5px] pr-1.5 pt-2 flex flex-col items-center justify-between" aria-label="Resource Monitor">
      <svg class="size-[30px]" viewBox="0 0 30 30"><path d="M1 9l8-5v20l-8-2z" fill="#bbb"/><path d="M8 3l21 3-2 17-20-3z" fill="#ddd"/><path d="M10 6l17 2-1.500 12L9 18z" fill="#eef6fa"/><path d="M10 15l3-1 2-5 3 7 3-6 2 5h3" fill="none" stroke="#4a90b0" stroke-width="1.200"/><ellipse cx="18" cy="26" rx="7" ry="3.500" fill="#ccc"/></svg>
      <span class="w-full h-[3px] bg-[#76b9ed]"></span>
    </button>
    <button class="w-[62px] pl-[5px] pr-1.5 pt-2 flex flex-col items-center justify-between" aria-label="Kindle">
      <svg class="size-[30px]" viewBox="0 0 30 30"><rect x=".5" y=".5" width="29" height="29" rx="3" fill="#0b2038" stroke="#1d4a78"/><path d="M1 15l14-4 14 3v15H1z" fill="#2f78c0"/><path d="M17 29c6-6 4-14 2-17l10-1v18zM11 24l4-5 3 5 2 5h-7z" fill="#050d18"/><text x="15" y="9.500" text-anchor="middle" font-size="8" fill="#f09a28">kindle</text></svg>
      <span class="w-full h-[3px] bg-[#76b9ed]"></span>
    </button>
    <button class="w-[62px] pl-[5px] pr-1.5 pt-2 flex flex-col items-center justify-between" aria-label="Calculator">
      <svg class="size-[30px]" viewBox="0 0 30 30"><rect x="4.500" y=".5" width="21" height="29" rx="1.500" fill="#9cc4e0" stroke="#d5e8f5"/><path d="M7 3h16" stroke="#e8963a" stroke-width="1.500"/><path d="M7 5h16v7H7z" fill="#dcebf5"/><path d="M7 16h16M7 19.500h16M7 23h16M7 26.500h16" stroke="#f2f8fc" stroke-width="2.200" stroke-dasharray="3 1.300"/><path d="M20 22h3v6h-3z" fill="#e8a030"/><text x="18" y="11.500" font-size="7" fill="#235">0</text></svg>
      <span class="w-full h-[3px] bg-[#76b9ed]"></span>
    </button>
    <button class="w-[62px] pl-[5px] pr-1.5 pt-2 flex flex-col items-center justify-between" aria-label="SQL Server Tools">
      <svg class="size-[30px]" viewBox="0 0 30 30"><path d="M1 2c0-2 9-2 9 0v10c0 2-9 2-9 0z" fill="#f0b828"/><path d="M1 3c2 1.500 7 1.500 9 0" fill="none" stroke="#fbe08a"/><path d="M14 1.500h10v10M1.500 17v7h10" fill="none" stroke="#4f9a3a" stroke-width="1.200" stroke-dasharray="2 1.500"/><path d="M26 30L13 16" stroke="#c9ccd2" stroke-width="3"/><path d="M10 14l3 1 1 3 3-2-2-4z" fill="#c9ccd2"/><path d="M13 30l10-12" stroke="#c79a4a" stroke-width="3"/><path d="M18 15l5-1 7 7-2 2-4-4-3 2z" fill="#d5d8dd"/></svg>
      <span class="w-full h-[3px] bg-[#76b9ed]"></span>
    </button>

    <div class="ml-auto flex items-center text-sm">
      <svg class="w-4 h-2.5" viewBox="0 0 16 10"><path d="M.5 9L8 1l7.500 8" fill="none" stroke="#fff" stroke-width="1.400"/></svg>
      <svg class="ml-3 mt-0.5 w-5 h-4" viewBox="0 0 20 16"><path d="M1 1.500h17v9H1z" fill="none" stroke="#fff" stroke-width="1.300"/><path d="M3 3h2v6H3z" fill="#fff"/><circle cx="14" cy="10.500" r="5.500" fill="#158a2e"/><path d="M14 7l2 3-2 2-2-2zM14 12v2" fill="none" stroke="#fff"/></svg>
      <svg class="ml-3 size-4" viewBox="0 0 16 16"><path d="M1 14.500A13.500 13.500 0 0 1 15.500 1M4.500 15A10 10 0 0 1 15.500 5M8 15a7 7 0 0 1 7.500-6" fill="none" stroke="#ddd" stroke-width="1.300"/><circle cx="13.500" cy="14" r="1.700" fill="#fff"/></svg>
      <svg class="ml-2.5 w-5 h-4" viewBox="0 0 20 16"><path d="M1 5.500h3l4-4v13l-4-4H1zM10.500 6c1 1 1 3 0 4M13 4c2.500 2 2.500 6 0 8M16 2c4 3 4 9 0 12" fill="none" stroke="#fff" stroke-width="1.200"/></svg>
      <span class="ml-3.5">POL</span>
      <div class="ml-2.5 w-[86px] text-center leading-[23px]"><div>19:20</div><div>17.11.2016</div></div>
      <button class="relative ml-[15px] mr-[15px] w-[30px] h-[30px]" aria-label="Notifications">
        <svg class="size-[30px]" viewBox="0 0 30 30"><path d="M0 0h20v17H5v4l-4-4H0z" fill="#fff"/><path d="M4 4.500h12M4 8.500h12M4 12.500h8" stroke="#000" stroke-width="1.500"/><circle cx="19.500" cy="19.500" r="10" fill="#333" stroke="#999"/></svg>
        <span class="absolute left-[15px] top-[9px] text-sm/[20px] font-semibold">2</span>
      </button>
      <span class="h-full w-px mr-[5px] bg-[#555]"></span>
    </div>
  </footer>

  <script>
    const months = [
      ["2015", "July", "Month 1", "77", "3", "3,90", "231"],
      ["2015", "August", "Month 2", "101", "2", "1,98", "202"],
      ["2015", "September", "Month 3", "78", "4", "5,13", "312"],
      ["2015", "October", "Month 4", "79", "2", "2,53", "158"],
      ["2015", "November", "Month 5", "51", "0", "0,00", "0"],
      ["2015", "December", "Month 6", "36", "0", "0,00", "0"],
      ["2016", "January", "Month 7", "84", "0", "0,00", "0"]
    ];
    document.getElementById("rows").innerHTML = months.map(r =>
      `<tr class="border-b border-[#e8e8e8]">${r.map((c, i) =>
        `<td class="${i < 3 ? "pl-3" : "pr-[5px] text-right"}">${c}</td>`).join("")}</tr>`
    ).join("");

    // slicers
    const closed = `<svg class="w-[6px] h-2.5 mr-[5px]" viewBox="0 0 6 10"><path d="M0 0v10l6-5z" fill="#aaa"/></svg>`;
    const open = `<svg class="w-[7px] h-[7px] mr-1" viewBox="0 0 7 7"><path d="M7 0v7H0z" fill="#aaa"/></svg>`;
    const slicerRow = (name, arrow, checked) =>
      `<li><label class="flex items-center h-[23px] ${arrow ? "pl-[10px]" : "pl-[37px]"}">${arrow}
        <input class="appearance-none size-3.5 mr-[5px] border-2 border-[#c8c8c8] checked:bg-[#212121] checked:border-[#212121]" type="checkbox" ${checked ? "checked" : ""} />${name}</label></li>`;
    const names = ["January", "February", "March", "April", "May", "June", "July", "August"];
    document.getElementById("years").innerHTML =
      slicerRow("2016", open, true) + names.map(m => slicerRow(m, "", m === "January")).join("");
    document.getElementById("countries").innerHTML =
      ["International", "Khimpharm_CAK", "Poland", "Russia"].map(c => slicerRow(c, closed, false)).join("");

    // fields list
    document.getElementById("tables").innerHTML = ["Absenteeism - Raw...", "Calendar", "Fact_HR_KPI4"].map((t, i) =>
      `<li class="flex items-center h-6 pl-[11px] ${i === 2 ? "bg-[#333]" : ""}">
        ${i === 2 ? `<svg class="w-1.5 h-1.5 mr-2" viewBox="0 0 6 6"><path d="M6 0v6H0z" fill="#aaa"/></svg>`
                  : `<svg class="w-1.5 h-2.5 mr-2" viewBox="0 0 6 10"><path d="M0 0v10l5-5z" fill="#999"/></svg>`}
        <svg class="w-[13px] h-3 mr-3"><use href="#grid"/></svg><span class="whitespace-nowrap">${t}</span></li>`
    ).join("");

    const flexi = "FLEXI_CATEGO...";
    const fields = [
      ["attrition_rate_...", "sigma"], ["Column1", "column"], ["date_stamp"], ["end_of_month"], ["fired", "sigma"],
      [flexi], [flexi, "tree"], [flexi], [flexi], [flexi], [flexi, "tree"], [flexi], [flexi, "tree"], [flexi], [flexi], [flexi],
      ["hired", "sigma"], ["Measure 2", "calc"], ["Measure 3", "calc"], ["Mesure", "calc"], ["Month"], ["month_period"],
      ["MonthName"], ["period_id", "sigma"], ["Procent", "calc"], ["Suma", "calc"], ["Year"], ["yme", "sigma"], ["yms", "sigma"]
    ];
    document.getElementById("fields").innerHTML = fields.map(([name, icon]) =>
      `<li><label class="flex items-center h-[22px] pl-[15px] rounded-sm bg-[#666] border ${name === "Measure 3" ? "border-[#e6c62e]" : "border-[#383838] border-b-2"}">
        <svg class="w-[5px] h-2 mr-1.5" viewBox="0 0 5 8">${icon === "tree" ? `<path d="M0 0v8l5-4z" fill="#999"/>` : ""}</svg>
        <input class="appearance-none size-3 mr-1 bg-white border-2 border-[#ccc]" type="checkbox" />
        <svg class="size-3 mr-[5px]">${icon ? `<use href="#${icon}"/>` : ""}</svg>
        <span class="whitespace-nowrap">${name}</span></label></li>`
    ).join("");
  </script>
</body>
</html>
